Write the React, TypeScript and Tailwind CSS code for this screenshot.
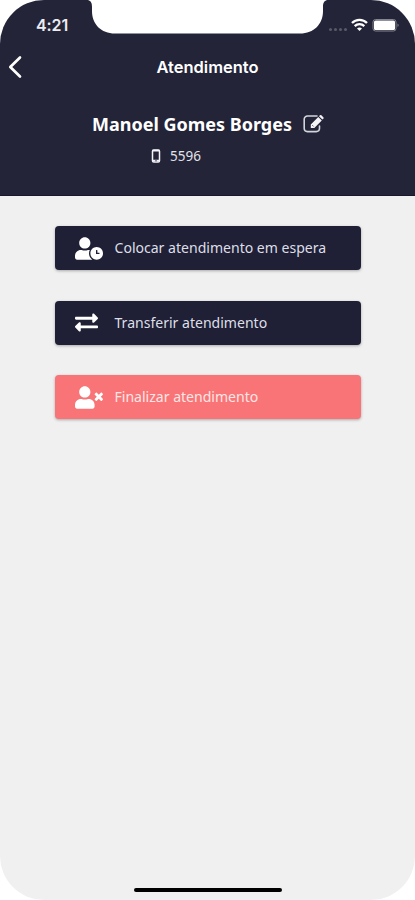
import type { ReactNode } from "react";
import { FaExchangeAlt, FaUserClock, FaUserTimes } from "react-icons/fa";

function Notch() {
  return (
    <svg className="absolute left-0 top-0" width="415" height="35" viewBox="0 0 415 35" fill="#fff">
      <path d="M88 0C91 1 92 3 92 7v4c0 13 9 22.500 23 22.500h185c14 0 23-9.500 23-22.500V7c0-4 1-6 4-7z" />
    </svg>
  );
}

function StatusBar() {
  return (
    <div className="flex h-[45px] items-start justify-between pl-9 pr-4">
      <span className="mt-[13px] font-['Inter'] text-[16px] font-semibold leading-6 tracking-[-0.1px] text-[#ececf1]">4:21</span>
      <div className="mt-[18px] flex items-center">
        <div className="mr-[4px] mt-[8px] flex gap-[2px]">
          {[0, 1, 2, 3].map((i) => (
            <span key={i} className="h-[3px] w-[3px] rounded-full bg-[#595a68]" />
          ))}
        </div>
        <svg width="17" height="14" viewBox="0 0 17 14" fill="none" stroke="#fff" strokeWidth="2.300">
          <path d="M1 5C5 .8 12 .8 16 5M3.700 8.100c2.700-2.700 6.900-2.700 9.600 0" />
          <path d="M8.500 13 6 10.600c1.400-1.400 3.600-1.400 5 0z" fill="#fff" stroke="none" />
        </svg>
        <svg className="ml-[4px]" width="27" height="14" viewBox="0 0 27 14">
          <rect x="1" y="1.500" width="23" height="11.500" rx="2.500" fill="none" stroke="#85868f" />
          <rect x="2" y="2.500" width="21" height="9.500" rx="1.500" fill="#fff" />
          <path d="M25.500 5.500c1.500.6 1.500 3 0 3.600z" fill="#85868f" />
        </svg>
      </div>
    </div>
  );
}

function EditIcon() {
  return (
    <svg width="21" height="18" viewBox="0 0 21 18">
      <path
        d="M14 1H4.500A3.300 3.300 0 0 0 1.200 4.300v9A3.300 3.300 0 0 0 4.500 16.600h8.700a3.300 3.300 0 0 0 3.300-3.300V11"
        fill="none"
        stroke="#d4d4dd"
        strokeWidth="1.600"
        strokeLinecap="round"
      />
      <path d="m7.800 9.400 7.500-7.500 3.500 3.500-7.500 7.500H7.800zM16 1.200l.9-.9q.8-.6 1.500 0l1.900 1.900q.7.700 0 1.500l-.9.900z" fill="#f4f4f8" />
      <path d="m9.300 10.200 1.200 1.200" stroke="#232438" strokeWidth=".8" />
    </svg>
  );
}

function ActionButton({ icon, label, tone }: { icon: ReactNode; label: string; tone: string }) {
  return (
    <button
      className={`flex h-11 w-[306px] items-center rounded-[4px] pl-5 text-left shadow-[0_1px_3px_rgba(0,0,0,0.3)] ${tone}`}
    >
      <span className="flex w-10 items-center text-white">{icon}</span>
      <span className="whitespace-nowrap text-[14.050px] leading-5">{label}</span>
    </button>
  );
}

export default function App() {
  return (
    <div className="h-[900px] w-[415px] overflow-hidden bg-white font-['Noto_Sans',sans-serif]">
      <main className="relative flex h-full flex-col overflow-hidden rounded-[44px] bg-[#f0f0f0]">
        <header className="h-[196px] border-b border-[#17182b] bg-[#232438] text-white">
          <StatusBar />
          <nav className="grid h-[43px] grid-cols-[40px_1fr_40px] items-center">
            <svg className="ml-2" width="14" height="24" viewBox="0 0 14 24" fill="none" stroke="#fff" strokeWidth="2.700" strokeLinecap="round" strokeLinejoin="round">
              <path d="M12 2.500 2.300 12 12 21.500" />
            </svg>
            <h1 className="text-center font-['Inter'] text-[16.500px] font-semibold leading-6">Atendimento</h1>
          </nav>
          <div className="mt-[22px] flex h-7 items-center pl-[92px]">
            <h2 className="w-[211px] whitespace-nowrap text-[18px] font-bold leading-7">Manoel Gomes Borges</h2>
            <EditIcon />
          </div>
          <div className="mt-[8px] flex h-5 items-center pl-[151px]">
            <svg width="10" height="14" viewBox="0 0 10 14">
              <rect x="1.500" y="1" width="7" height="12" rx="1.300" fill="none" stroke="#f4f4f8" strokeWidth="1.500" />
              <path d="M1.500 1.700h7M1.500 11.700h7" stroke="#f4f4f8" strokeWidth="1.700" />
              <path d="M4.300 11.800h1.400" stroke="#232438" />
            </svg>
            <span className="ml-[9px] text-[13.500px] leading-5 text-[#e2e2e9]">5596</span>
          </div>
        </header>
        <section className="mt-[30px] flex flex-col items-center gap-[30.500px]">
          <ActionButton icon={<FaUserClock className="h-[23px] w-[28px]" />} label="Colocar atendimento em espera" tone="bg-[#1f2036] text-[#dedee6]" />
          <ActionButton icon={<FaExchangeAlt className="h-[23px] w-[23px]" />} label="Transferir atendimento" tone="bg-[#1f2036] text-[#dedee6]" />
          <ActionButton icon={<FaUserTimes className="h-[23px] w-[28px]" />} label="Finalizar atendimento" tone="bg-[#f87476] text-[#ffe5e5]" />
        </section>
        <div className="mb-[8px] mt-auto h-[4px] w-[148px] self-center rounded-full bg-black" />
        <Notch />
      </main>
    </div>
  );
}
